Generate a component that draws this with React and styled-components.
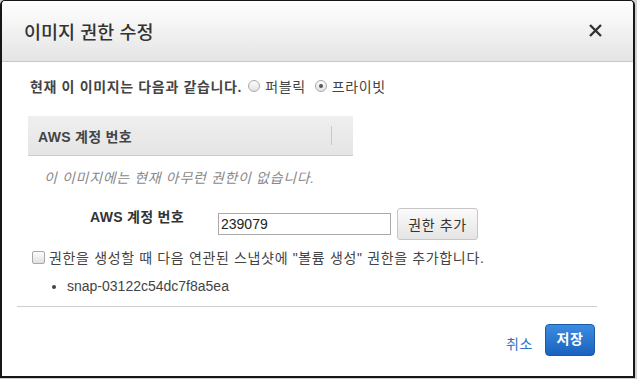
import styled, { createGlobalStyle } from 'styled-components'

const GlobalStyle = createGlobalStyle`
    body {
        margin: 0;
        background: #cfcfcf;
        font-family: "Liberation Sans", "Noto Sans CJK KR", sans-serif;
        color: #444;
    }
`

const Dialog = styled.div`
    box-sizing: border-box;
    width: 635px;
    height: 378px;
    border: 2px solid #161616;
    border-top-width: 1px;
    border-radius: 5px 5px 0 0;
    background: #fff;
    display: flex;
    flex-direction: column;
    overflow: hidden;
`

const Header = styled.div`
    height: 60px;
    flex-shrink: 0;
    display: flex;
    align-items: center;
    justify-content: space-between;
    padding: 0 29px 0 22px;
    border-bottom: 1px solid #c8c8c8;
    background: linear-gradient(#ffffff, #e4e4e4);
`

const Title = styled.div`
    font-size: 18.5px;
    font-weight: 500;
    color: #333;
`

const Close = styled.button`
    border: none;
    background: none;
    padding: 0;
    width: 16px;
    height: 16px;
    display: flex;
    cursor: pointer;
`

const Body = styled.div`
    padding: 14px 26px 0 26px;
    display: flex;
    flex-direction: column;
    letter-spacing: 0.65px;
`

const Intro = styled.div`
    display: flex;
    align-items: center;
    height: 20px;
    font-size: 14px;
    gap: 5px;
`

const Strong = styled.span`
    font-weight: bold;
    margin-left: 2px;
    margin-right: 1px;
`

const Radio = styled.span`
    box-sizing: border-box;
    width: 12px;
    height: 12px;
    border-radius: 50%;
    border: 1px solid #a9a9a9;
    background: linear-gradient(#fdfdfd, #e2e2e2);
    display: inline-flex;
    align-items: center;
    justify-content: center;
    margin-left: ${({ $gap }) => $gap || 0}px;

    &::after {
        content: '';
        width: 4px;
        height: 4px;
        border-radius: 50%;
        background: ${({ $checked }) => ($checked ? '#555' : 'transparent')};
    }
`

const TableHead = styled.div`
    margin-top: 20px;
    width: 325px;
    height: 40px;
    box-sizing: border-box;
    display: flex;
    align-items: center;
    justify-content: space-between;
    padding: 0 21px 0 10px;
    background: linear-gradient(#efefef, #e5e5e5);
    border-bottom: 1px solid #cdcdcd;
    font-size: 14px;
    font-weight: bold;
    color: #444;
    letter-spacing: 0.3px;
`

const Divider = styled.span`
    width: 1px;
    height: 19px;
    background: #c9c9c9;
`

const Empty = styled.div`
    margin-top: 12px;
    padding-left: 16px;
    height: 20px;
    line-height: 20px;
    font-size: 14px;
    font-style: italic;
    color: #8a8a8a;
`

const FormRow = styled.div`
    margin-top: 20px;
    display: flex;
    align-items: flex-start;
    letter-spacing: 0.3px;
`

const Label = styled.div`
    width: 128px;
    padding-left: 62px;
    line-height: 18px;
    font-size: 14px;
    font-weight: bold;
    color: #333;
`

const Input = styled.input`
    box-sizing: border-box;
    width: 173px;
    height: 22px;
    margin-top: 5px;
    border: 1px solid #a9a9a9;
    padding: 0 2px;
    font-family: "Liberation Sans", sans-serif;
    font-size: 14px;
    color: #222;
    outline: none;
`

const Button = styled.button`
    box-sizing: border-box;
    margin-left: 6px;
    width: 81px;
    height: 32px;
    border: 1px solid #c6c6c6;
    border-radius: 3px;
    background: linear-gradient(#fbfbfb, #e4e4e4);
    font-family: "Liberation Sans", "Noto Sans CJK KR", sans-serif;
    font-size: 14px;
    letter-spacing: 0.6px;
    color: #333;
    padding: 0;
`

const CheckRow = styled.label`
    margin-top: 7px;
    margin-left: 4px;
    display: flex;
    align-items: center;
    gap: 4px;
    height: 20px;
    font-size: 14px;
    color: #444;
`

const Checkbox = styled.span`
    box-sizing: border-box;
    width: 13px;
    height: 13px;
    border: 1px solid #a9a9a9;
    border-radius: 2px;
    background: linear-gradient(#fdfdfd, #e0e0e0);
`

const List = styled.ul`
    margin: 9px 0 0 0;
    padding-left: 39px;
    font-size: 14px;
    line-height: 20px;
    color: #444;
    letter-spacing: 0;

    li::marker {
        font-size: 13px;
    }
`

const Rule = styled.hr`
    margin: 10px 36px 0 15px;
    border: none;
    border-top: 1px solid #cfcfcf;
`

const Footer = styled.div`
    display: flex;
    justify-content: flex-end;
    align-items: center;
    gap: 12px;
    padding: 17px 38px 0 0;
`

const Cancel = styled.a`
    font-size: 14px;
    letter-spacing: 0.6px;
    color: #2f73c7;
    margin-top: 5px;
    cursor: pointer;
`

const Save = styled.button`
    box-sizing: border-box;
    width: 50px;
    height: 32px;
    border: 1px solid #1c5aa8;
    border-radius: 4px;
    background: linear-gradient(#3b8ce0, #1a62be);
    color: #fff;
    font-family: "Liberation Sans", "Noto Sans CJK KR", sans-serif;
    font-weight: bold;
    font-size: 14px;
    letter-spacing: 0.5px;
    padding: 0 0 4px 0;
`

export default function App() {
    return (
        <>
            <GlobalStyle />
            <Dialog>
                <Header>
                    <Title>이미지 권한 수정</Title>
                    <Close aria-label="닫기">
                        <svg width="15" height="15" viewBox="0 0 15 15">
                            <path d="M2 2L13 13M13 2L2 13" stroke="#333" strokeWidth="2.4" />
                        </svg>
                    </Close>
                </Header>
                <Body>
                    <Intro>
                        <Strong>현재 이 이미지는 다음과 같습니다.</Strong>
                        <Radio />
                        <span>퍼블릭</span>
                        <Radio $checked $gap={4} />
                        <span>프라이빗</span>
                    </Intro>
                    <TableHead>
                        <span>AWS 계정 번호</span>
                        <Divider />
                    </TableHead>
                    <Empty>이 이미지에는 현재 아무런 권한이 없습니다.</Empty>
                    <FormRow>
                        <Label>AWS 계정 번호</Label>
                        <Input defaultValue="239079" />
                        <Button>권한 추가</Button>
                    </FormRow>
                    <CheckRow>
                        <Checkbox />
                        권한을 생성할 때 다음 연관된 스냅샷에 "볼륨 생성" 권한을 추가합니다.
                    </CheckRow>
                    <List>
                        <li>snap-03122c54dc7f8a5ea</li>
                    </List>
                </Body>
                <Rule />
                <Footer>
                    <Cancel>취소</Cancel>
                    <Save>저장</Save>
                </Footer>
            </Dialog>
        </>
    )
}
